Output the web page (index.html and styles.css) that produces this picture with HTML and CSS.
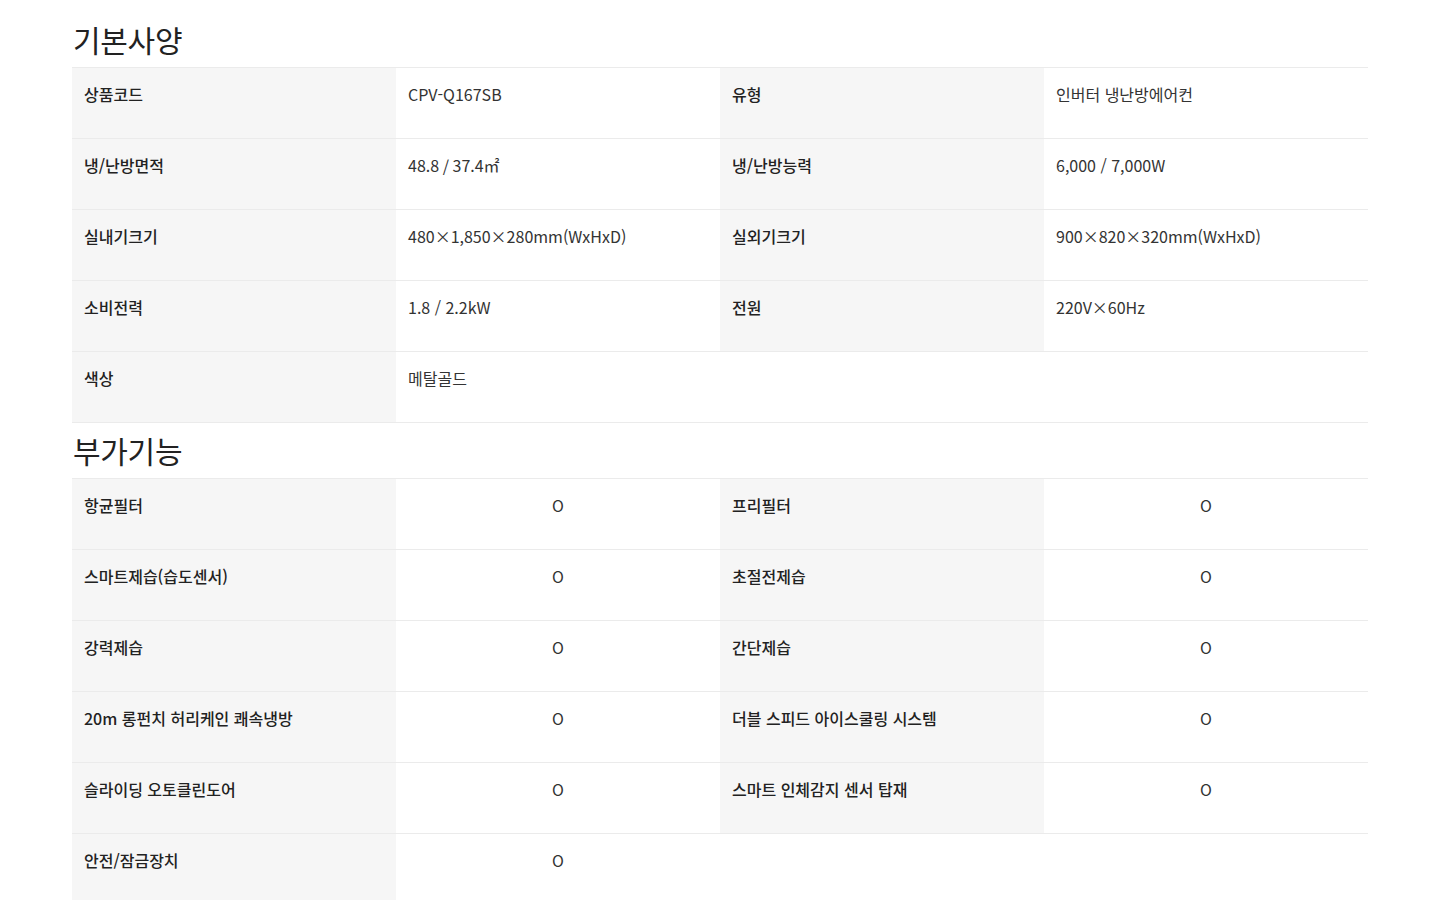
FILE: index.html
```html
<!DOCTYPE html>
<html lang="ko">
<head>
<meta charset="utf-8">
<title>제품 사양</title>
<link rel="stylesheet" href="styles.css">
</head>
<body>
<div class="wrap">
  <h2 class="sec-title">기본사양</h2>
  <table class="spec">
    <colgroup><col><col><col><col></colgroup>
    <tr><th>상품코드</th><td>CPV-Q167SB</td><th>유형</th><td>인버터 냉난방에어컨</td></tr>
    <tr><th>냉/난방면적</th><td>48.8 / 37.4㎡</td><th>냉/난방능력</th><td>6,000 / 7,000W</td></tr>
    <tr><th>실내기크기</th><td>480×1,850×280mm(WxHxD)</td><th>실외기크기</th><td>900×820×320mm(WxHxD)</td></tr>
    <tr><th>소비전력</th><td>1.8 / 2.2kW</td><th>전원</th><td>220V×60Hz</td></tr>
    <tr><th>색상</th><td>메탈골드</td><td class="empty"></td><td class="empty"></td></tr>
  </table>
  <h2 class="sec-title">부가기능</h2>
  <table class="spec feature">
    <colgroup><col><col><col><col></colgroup>
    <tr><th>항균필터</th><td>O</td><th>프리필터</th><td>O</td></tr>
    <tr><th>스마트제습(습도센서)</th><td>O</td><th>초절전제습</th><td>O</td></tr>
    <tr><th>강력제습</th><td>O</td><th>간단제습</th><td>O</td></tr>
    <tr><th>20m 롱펀치 허리케인 쾌속냉방</th><td>O</td><th>더블 스피드 아이스쿨링 시스템</th><td>O</td></tr>
    <tr><th>슬라이딩 오토클린도어</th><td>O</td><th>스마트 인체감지 센서 탑재</th><td>O</td></tr>
    <tr><th>안전/잠금장치</th><td>O</td><td class="empty"></td><td class="empty"></td></tr>
  </table>
</div>
</body>
</html>
```

FILE: styles.css
```css
html, body {
  margin: 0;
  padding: 0;
  background: #fff;
}
body {
  font-family: "Noto Sans CJK KR", "Noto Sans", sans-serif;
  color: #222;
}
.wrap {
  width: 1296px;
  margin: 0 72px;
  padding-top: 12px;
}
.sec-title {
  margin: 0;
  font-size: 30px;
  font-weight: 400;
  line-height: 55px;
  height: 55px;
  letter-spacing: -0.3px;
  color: #222;
  padding-left: 1px;
}
.spec {
  width: 100%;
  table-layout: fixed;
  border-collapse: collapse;
  border-top: 1px solid #ebebeb;
}
.spec tr {
  border-bottom: 1px solid #ebebeb;
}
.spec th,
.spec td {
  height: 71px;
  box-sizing: border-box;
  padding: 15px 12px 0;
  vertical-align: top;
  text-align: left;
  font-size: 16px;
  line-height: 22px;
  letter-spacing: 0;
}
.spec th {
  background: #f6f6f6;
  font-weight: 500;
  color: #222;
}
.spec td {
  font-weight: 400;
  color: #333;
}
.feature td {
  text-align: center;
}
```
